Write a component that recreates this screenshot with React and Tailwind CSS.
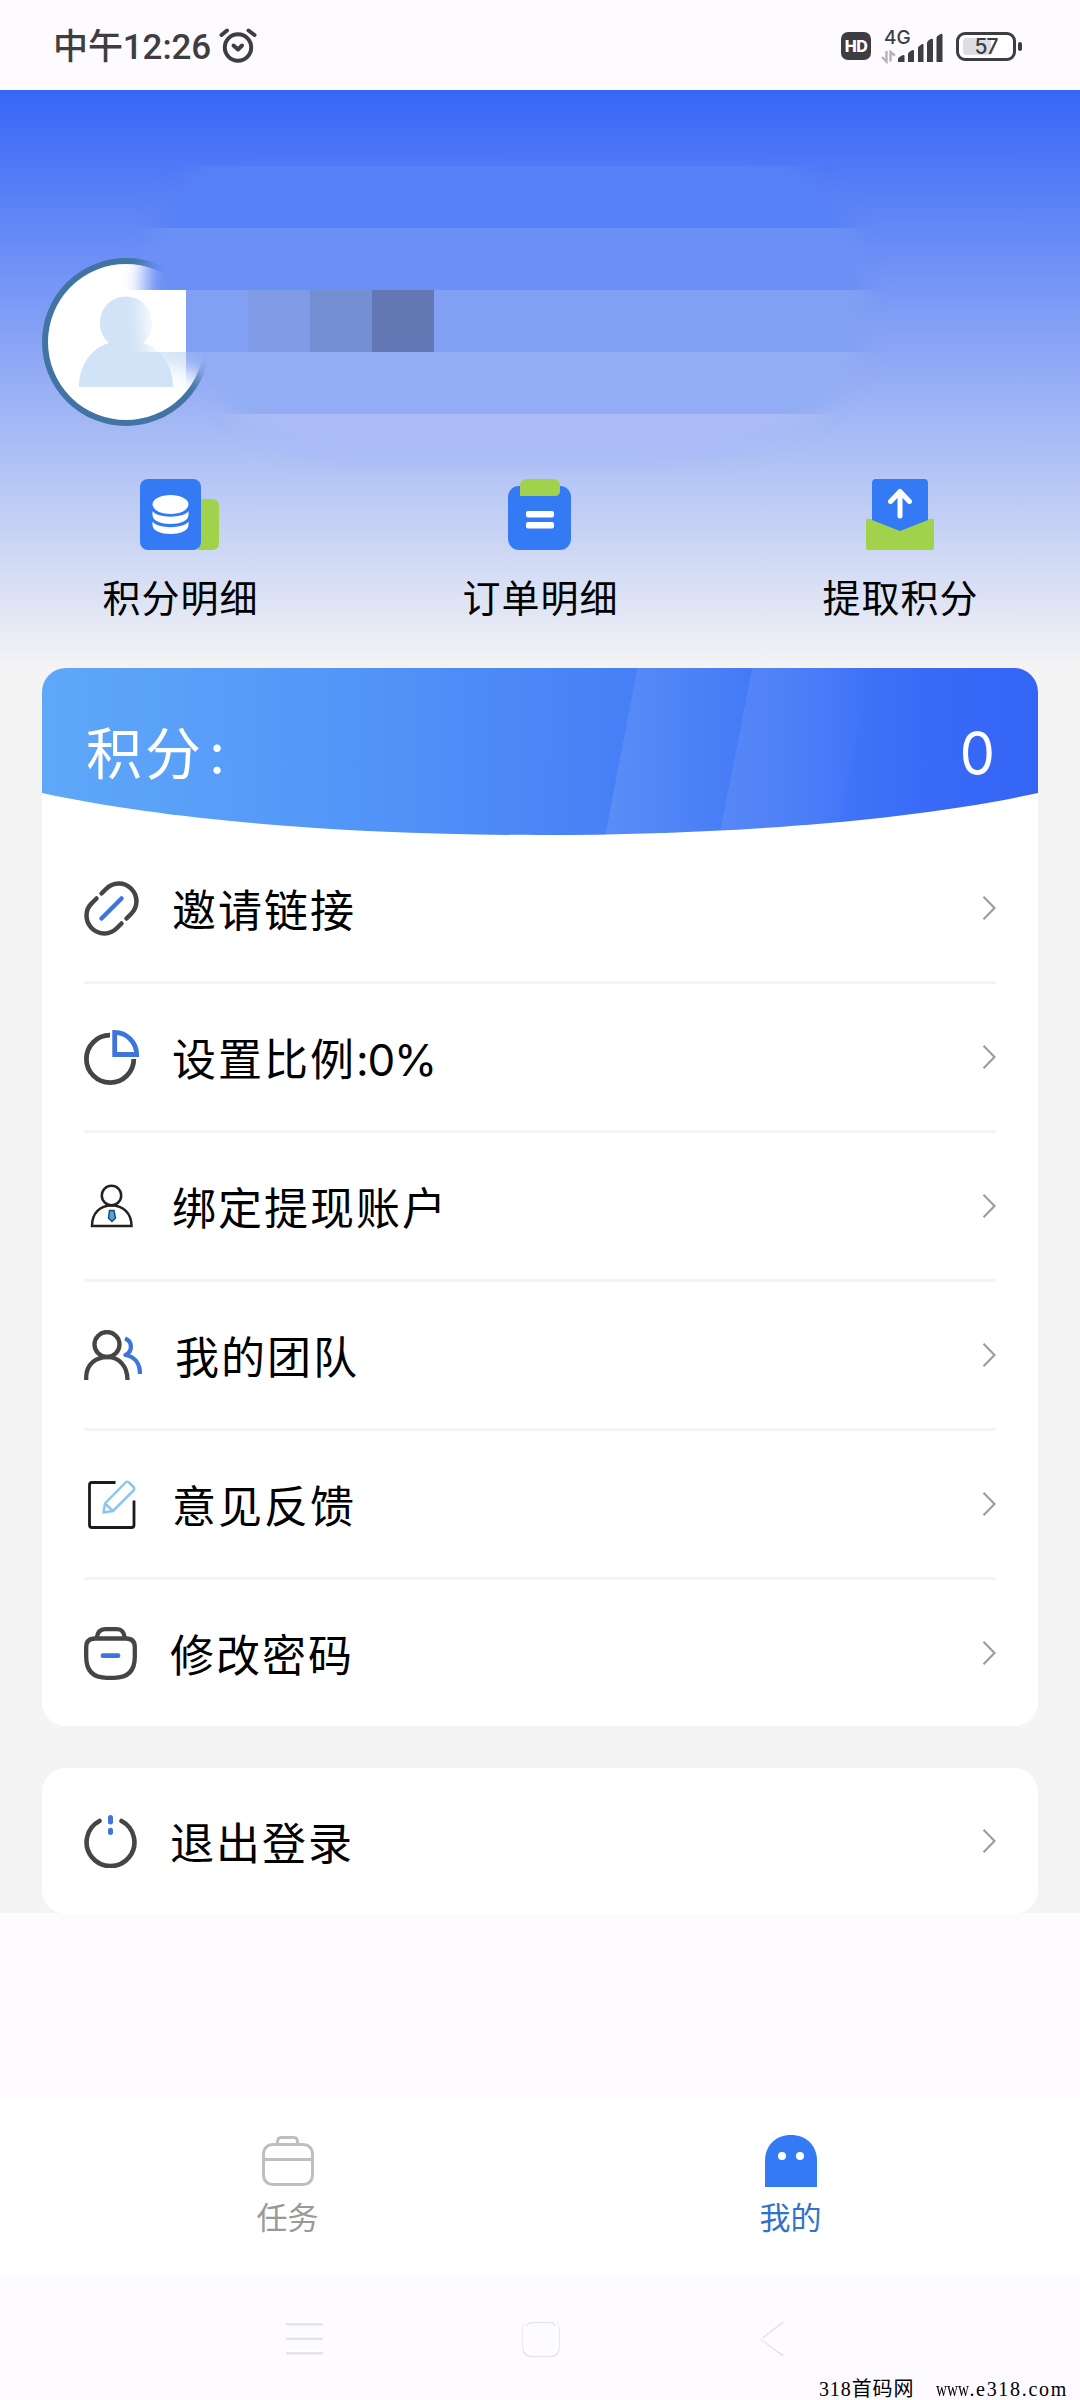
import React from "react";

const INK = "#454545";
const BLUE = "#337af4";

function AlarmIcon() {
  return (
    <svg className="ml-[7px] h-9 w-[38px]" viewBox="0 0 38 36" fill="none" stroke="#3e3d41" strokeWidth="4" strokeLinecap="round" strokeLinejoin="round">
      <circle cx="19" cy="20.5" r="13.2" />
      <path d="M14.5 18.5 19 22.5 23 18.5" />
      <path d="M2.5 8 8 3.5M29.5 3.5 35.5 8" />
    </svg>
  );
}

function SignalIcon() {
  return (
    <svg className="h-3.5 w-16 overflow-visible" viewBox="0 0 64 14">
      <g stroke="#b4b2b6" strokeWidth="2.4" fill="none">
        <path d="M5.500 3V13.500L1 9M9.500 13.500V4L14 7.500" />
      </g>
      <g fill="#3e3d41">
        <path d="M17 14V11Q17 9.500 20 8 23.500 6 23.500 8V14ZM27 14V6Q27 4.500 29 3.500 33 1 33 3V14ZM37 14V0Q37-1.500 39-2.500 42.500-5 42.500-3V14ZM46 14V-5Q46-6.500 48-8 52-10.500 52-8V14ZM55.500 14V-10Q55.500-12 58-13 61.500-15.500 61.500-13V14Z" />
      </g>
    </svg>
  );
}

function StatusBar() {
  return (
    <div className="flex h-[90px] items-center justify-between bg-[#fdfbff] pr-[58px] pl-[53px] text-[#3e3d41]">
      <div className="flex items-center">
        <span className="w-[159px] pt-[5px] text-[35px] leading-10 font-medium tracking-[-0.1px] whitespace-nowrap [font-family:Roboto,'Noto_Sans_CJK_SC',sans-serif]">中午12:26</span>
        <AlarmIcon />
      </div>
      <div className="flex items-center pt-0.5">
        <div className="flex h-7 w-[30px] items-center justify-center rounded-[7px] bg-[#3e3d41] text-[16px] leading-none font-extrabold tracking-[-0.5px] text-white">HD</div>
        <div className="ml-2.5 flex h-8 w-16 flex-col justify-between">
          <span className="pl-[3px] text-[19px] leading-4 font-medium">4G</span>
          <SignalIcon />
        </div>
        <div className="relative ml-[11px] flex h-[29px] w-[60px] items-center justify-center rounded-[9px] border-[3px] border-[#3e3d41] bg-white">
          <div className="absolute top-[3px] left-1 h-[17px] w-7 rounded-[3px] bg-[#dfdde1]" />
          <span className="relative text-[21px] leading-none font-medium tracking-[-1px]">57</span>
        </div>
        <div className="ml-0.5 h-[9px] w-1 rounded-[2px] bg-[#3e3d41]" />
      </div>
    </div>
  );
}

/* Avatar with the pixelated nickname strip that covers its right part. */
function Profile() {
  return (
    <svg className="block h-[389px] w-full" viewBox="0 90 1080 389">
      <defs>
        <filter id="soft" x="-10%" y="-20%" width="120%" height="140%">
          <feGaussianBlur stdDeviation="10" />
        </filter>
        <mask id="blob" maskUnits="userSpaceOnUse" x="60" y="100" width="900" height="380">
          <path filter="url(#soft)" fill="#fff" d="M240 130H735Q868 190 868 305 868 400 770 440 700 465 600 462H340Q265 450 228 405 202 368 150 362 140 320 146 260 160 190 240 130Z" />
        </mask>
      </defs>
      <circle cx="126" cy="342" r="81" fill="#fff" stroke="#4174a3" strokeWidth="6" />
      <path fill="#d1e3f7" d="M79 387C79 366 91 348 109 343 103 338 100 331 100 323 100 308 111 296.500 126 296.500S152 308 152 323C152 331 149 338 143 343 161 348 173 366 173 387Z" />
      <g mask="url(#blob)" shapeRendering="crispEdges">
        <rect x="62" y="166" width="868" height="62" fill="#5781f6" />
        <rect x="62" y="228" width="868" height="62" fill="#6a90f5" />
        <rect x="62" y="290" width="124" height="62" fill="#fff" />
        <rect x="186" y="290" width="744" height="62" fill="#819ff3" />
        <rect x="248" y="290" width="62" height="62" fill="#809be6" />
        <rect x="310" y="290" width="62" height="62" fill="#748ed2" />
        <rect x="372" y="290" width="62" height="62" fill="#6277b4" />
        <rect x="62" y="352" width="124" height="62" fill="#d3e3f6" />
        <rect x="186" y="352" width="744" height="62" fill="#92adf3" />
        <rect x="62" y="414" width="868" height="60" fill="#aabbf7" />
      </g>
    </svg>
  );
}

function PointsIcon() {
  return (
    <svg className="h-[71px] w-[79px] -translate-x-px" viewBox="0 0 79 71">
      <path fill="#a0d24c" d="M58 20H72Q79 20 79 27V64Q79 71 72 71H58Z" />
      <rect width="61" height="71" rx="8" fill={BLUE} />
      <g fill="#fff">
        <ellipse cx="30.500" cy="25.500" rx="18" ry="9.500" />
        <path d="M12.500 32C17 39.500 44 39.500 48.500 32V36C48.500 48 12.500 48 12.500 36Z" />
        <path d="M12.500 42.500C17 50 44 50 48.500 42.500V46C48.500 58 12.500 58 12.500 46Z" />
      </g>
    </svg>
  );
}

function OrderIcon() {
  return (
    <svg className="h-[71px] w-[63px] -translate-x-px" viewBox="0 0 63 71">
      <rect y="7" width="63" height="64" rx="11" fill={BLUE} />
      <path fill="#a0d24c" d="M12 17V7Q12 0 19 0H45Q52 0 52 7V12Q52 17 47 17Z" />
      <rect x="18" y="32" width="28" height="6.500" rx="2" fill="#fff" />
      <rect x="18" y="43" width="28" height="6.500" rx="2" fill="#fff" />
    </svg>
  );
}

function WithdrawIcon() {
  return (
    <svg className="h-[71px] w-[68px]" viewBox="0 0 68 71">
      <path fill="#a0d24c" d="M0 40H68V69Q68 71 66 71H2Q0 71 0 69Z" />
      <path fill={BLUE} d="M6 4Q6 0 10 0H58Q62 0 62 4V41L34 52 6 41Z" />
      <path d="M34 37V13M24.500 22.500 34 12.500 43.500 22.500" fill="none" stroke="#fff" strokeWidth="5" strokeLinecap="round" strokeLinejoin="round" />
    </svg>
  );
}

function LinkIcon() {
  return (
    <svg className="h-[55px] w-[55px]" viewBox="0 0 55 55" fill="none" stroke={INK} strokeWidth="4.500" strokeLinecap="round">
      <path d="M17.500 12.500 22 8C29 1 40 .5 47 7.500 54.500 15 54 26 47 33L42.500 37.500" />
      <path d="M12.500 17.500 8 22C.5 29 1 40 7.500 47 15 54.500 26 54 33 47L37.500 42.500" />
      <path d="M17.500 37.500 37.500 17.500" stroke="#3f74dc" />
    </svg>
  );
}

function PieIcon() {
  return (
    <svg className="h-[55px] w-[55px]" viewBox="0 0 55 55" fill="none" stroke={INK} strokeWidth="4.800">
      <path d="M26 5.200A23.700 23.700 0 1 0 49.800 29" />
      <path d="M30.700 2.400V24.500H52.600A22.100 22.100 0 0 0 30.700 2.400Z" stroke="#3f74dc" />
    </svg>
  );
}

function AccountIcon() {
  return (
    <svg className="h-[55px] w-[55px]" viewBox="0 0 55 55" fill="none" stroke="#222" strokeWidth="2.500">
      <circle cx="27.500" cy="16.500" r="9.700" />
      <path d="M8 47C8 34 16 26.500 27.500 26.500S47.500 34 47.500 47Z" />
      <path d="M25.500 31.500H30L31.500 39 28 42.500 24.500 39Z" fill="#4aa5e0" stroke="#234a66" strokeWidth="1.500" />
    </svg>
  );
}

function TeamIcon() {
  return (
    <svg className="h-[50px] w-[58px]" viewBox="0 0 58 50" fill="none" stroke={INK} strokeWidth="4.300">
      <circle cx="23" cy="14.500" r="12.500" />
      <path d="M2.200 50V47C2.500 34 12 27.200 23.500 27.200S43.500 36 43.500 50" />
      <path d="M41 8.500C48.500 11 49 21.500 41.500 25 50 26.500 56 33 56 44" stroke="#3f74dc" strokeLinejoin="round" />
    </svg>
  );
}

function FeedbackIcon() {
  return (
    <svg className="h-[55px] w-[55px]" viewBox="0 0 55 55" fill="none" strokeLinejoin="round">
      <path d="M31.500 5.500H8Q5.500 5.500 5.500 8V48Q5.500 50.500 8 50.500H47.500Q50 50.500 50 48V23.500" stroke="#1b1b1b" strokeWidth="2.800" />
      <path d="M19.500 35.500 21 26.500 41.500 5.500Q43 4 45 5.500L49.500 10Q51 11.500 49.500 13.500L29 34Z" stroke="#8cc6ee" strokeWidth="2.500" />
      <path d="M21 26.500 29 34" stroke="#8cc6ee" strokeWidth="2.500" />
    </svg>
  );
}

function PasswordIcon() {
  return (
    <svg className="h-[53px] w-[53px]" viewBox="0 0 53 53" fill="none" stroke={INK} strokeWidth="4.300">
      <path d="M12.500 11.500C13.500 5 16 2.200 21 2.200H33C38 2.200 40 5 41 11.500" />
      <path d="M11 11.500H42Q50.800 11.500 50.800 20V30Q50.800 50.800 30 50.800H23Q2.200 50.800 2.200 30V20Q2.200 11.500 11 11.500Z" />
      <path d="M19 28.700H34" stroke="#3f74dc" strokeWidth="4.800" strokeLinecap="round" />
    </svg>
  );
}

function PowerIcon() {
  return (
    <svg className="h-[53px] w-[53px]" viewBox="0 0 53 53" fill="none" stroke={INK} strokeWidth="4.600" strokeLinecap="round">
      <path d="M15.500 6A23.900 23.900 0 1 0 37.500 6" />
      <path d="M26.500 2.500V7M26.500 15.200V17.500" stroke="#3f74dc" strokeWidth="5" />
    </svg>
  );
}

function Chevron() {
  return (
    <svg className="ml-auto h-6 w-[13px]" viewBox="0 0 13 24" fill="none" stroke="#9d9d9d" strokeWidth="2.200">
      <path d="M.5 .8 11.500 12 .5 23.200" />
    </svg>
  );
}

function MenuRow({ icon, label, divider }) {
  return (
    <div className={divider ? "flex h-[149px] items-center border-b-[3px] border-[#f4f4f4]" : "flex h-[146px] items-center"}>
      {icon}
      <span className="ml-[33px] pt-[5px] text-[44px] leading-[60px] tracking-[2px] whitespace-nowrap text-black">{label}</span>
      <Chevron />
    </div>
  );
}

function Banner() {
  return (
    <div className="relative h-[167px]">
      <svg className="absolute inset-0 h-full w-full" viewBox="0 0 997 167" preserveAspectRatio="none">
        <defs>
          <linearGradient id="banner">
            <stop offset="0" stopColor="#5fa8f8" />
            <stop offset=".3" stopColor="#5396f8" />
            <stop offset=".58" stopColor="#4780f6" />
            <stop offset=".78" stopColor="#4377f7" />
            <stop offset=".9" stopColor="#3869f7" />
            <stop offset="1" stopColor="#3565f5" />
          </linearGradient>
          <linearGradient id="shine">
            <stop offset="0" stopColor="#fff" stopOpacity=".1" />
            <stop offset="1" stopColor="#fff" stopOpacity="0" />
          </linearGradient>
          <clipPath id="curve">
            <path d="M0 0H997V125C740 181 257 181 0 125Z" />
          </clipPath>
        </defs>
        <g clipPath="url(#curve)">
          <rect width="997" height="167" fill="url(#banner)" />
          <path d="M596 0H709L677 167H564Z" fill="url(#shine)" />
          <path d="M711 0H830L795 167H678Z" fill="url(#shine)" />
        </g>
      </svg>
      <div className="relative flex items-center justify-between pt-12 pr-[43px] pl-[44px] text-white">
        <span className="text-[56px] leading-[76px] tracking-[3px]">积分<span className="pl-[5px]">:</span></span>
        <span className="relative -top-px origin-right scale-x-[0.93] text-[60px] leading-[76px]">0</span>
      </div>
    </div>
  );
}

const shortcuts = [
  { label: "积分明细", icon: <PointsIcon /> },
  { label: "订单明细", icon: <OrderIcon /> },
  { label: "提取积分", icon: <WithdrawIcon /> },
];

const menu = [
  { label: "邀请链接", icon: <LinkIcon /> },
  { label: <>设置比例<span className="tracking-[-1.2px]">:0%</span></>, icon: <PieIcon /> },
  { label: "绑定提现账户", icon: <AccountIcon /> },
  { label: "我的团队", icon: <TeamIcon /> },
  { label: "意见反馈", icon: <FeedbackIcon /> },
  { label: "修改密码", icon: <PasswordIcon /> },
];

function TabBar() {
  return (
    <div className="grid h-[180px] grid-cols-2 bg-white pt-[38px] pr-[38px] pl-9">
      <div className="flex flex-col items-center text-[#999]">
        <svg className="h-[52px] w-[52px]" viewBox="0 0 52 52" fill="none" stroke="#bfbfbf" strokeWidth="3">
          <rect x="1.500" y="9.500" width="49" height="40" rx="9" />
          <path d="M1.500 24.500H50.500M15.500 9V7Q15.500 2.500 19 2.500H32Q35.500 2.500 35.500 7V9" />
        </svg>
        <span className="mt-[9px] text-[31px] leading-[44px]">任务</span>
      </div>
      <div className="flex flex-col items-center text-[#3272cc]">
        <svg className="h-[52px] w-[52px]" viewBox="0 0 52 52">
          <path fill={BLUE} d="M0 52V26C0 10 11 0 26 0S52 10 52 26V52Z" />
          <circle cx="17" cy="21" r="4" fill="#fff" />
          <circle cx="35" cy="21" r="4" fill="#fff" />
        </svg>
        <span className="mt-[9px] text-[31px] leading-[44px]">我的</span>
      </div>
    </div>
  );
}

function SystemNav() {
  return (
    <div className="flex h-[123px] flex-col justify-between pt-[41px]">
      <div className="flex items-center gap-[199px] pl-[286px]">
        <svg className="h-10 w-[37px]" viewBox="0 0 37 40" strokeWidth="2.500">
          <path stroke="#fff" d="M0 4H37M0 18.500H37M0 33H37" />
          <path stroke="#e6e4e8" d="M0 6.300H37M0 20.800H37M0 35.300H37" />
        </svg>
        <svg className="h-10 w-[38px]" viewBox="0 0 38 40" fill="none">
          <rect x="1.500" y="3.500" width="35" height="34.500" rx="7" stroke="#e6e4e8" strokeWidth="2.500" />
          <rect x="2.500" y="3" width="33" height="33.500" rx="7" stroke="#fff" strokeWidth="2.500" />
          <path d="M5 8Q6 4.500 10 4.500H28Q32 4.500 33 8" stroke="#e8e6ea" strokeWidth="1.300" />
        </svg>
        <svg className="h-10 w-[25px]" viewBox="0 0 25 40" fill="none" strokeWidth="2.500">
          <path d="M24 4 2 20.500 24 37.500" stroke="#e6e4e8" />
          <path d="M23 3 1.500 19.500 23 35" stroke="#fff" strokeWidth="1.500" />
        </svg>
      </div>
      <div className="flex h-[21px] justify-end pr-3 text-[20px] leading-[21px] whitespace-pre text-black [font-family:'Liberation_Serif','Noto_Sans_CJK_SC',serif]">
        <span className="tracking-[0.9px]">318首码网</span>
        <span className="ml-[22px] w-[33px] origin-left scale-x-[0.76]">www</span>
        <span className="tracking-[1.7px]">.e318.com</span>
      </div>
    </div>
  );
}

export default function App() {
  return (
    <div className="flex h-[2400px] w-[1080px] flex-col overflow-hidden bg-[#fdfbff] [font-family:Inter,'Noto_Sans_CJK_SC',sans-serif]">
      <StatusBar />
      <main className="h-[1823px] bg-[#f4f4f4]">
        <header className="h-[578px] bg-[linear-gradient(to_bottom,#3666f7,#f4f4f4)]">
          <Profile />
          <div className="grid grid-cols-3">
            {shortcuts.map((s) => (
              <div key={s.label} className="flex flex-col items-center">
                {s.icon}
                <span className="mt-[22px] pl-px text-[38px] leading-[52px] tracking-[1px] text-black">{s.label}</span>
              </div>
            ))}
          </div>
        </header>
        <section className="mx-[42px] h-[1058px] overflow-hidden rounded-[24px] bg-white">
          <Banner />
          <div className="px-[42px]">
            {menu.map((m, i) => (
              <MenuRow key={i} icon={m.icon} label={m.label} divider={i < menu.length - 1} />
            ))}
          </div>
        </section>
        <section className="mx-[42px] mt-[42px] rounded-[24px] bg-white px-[42px]">
          <MenuRow icon={<PowerIcon />} label="退出登录" />
        </section>
      </main>
      <div className="h-[184px]" />
      <TabBar />
      <SystemNav />
    </div>
  );
}
